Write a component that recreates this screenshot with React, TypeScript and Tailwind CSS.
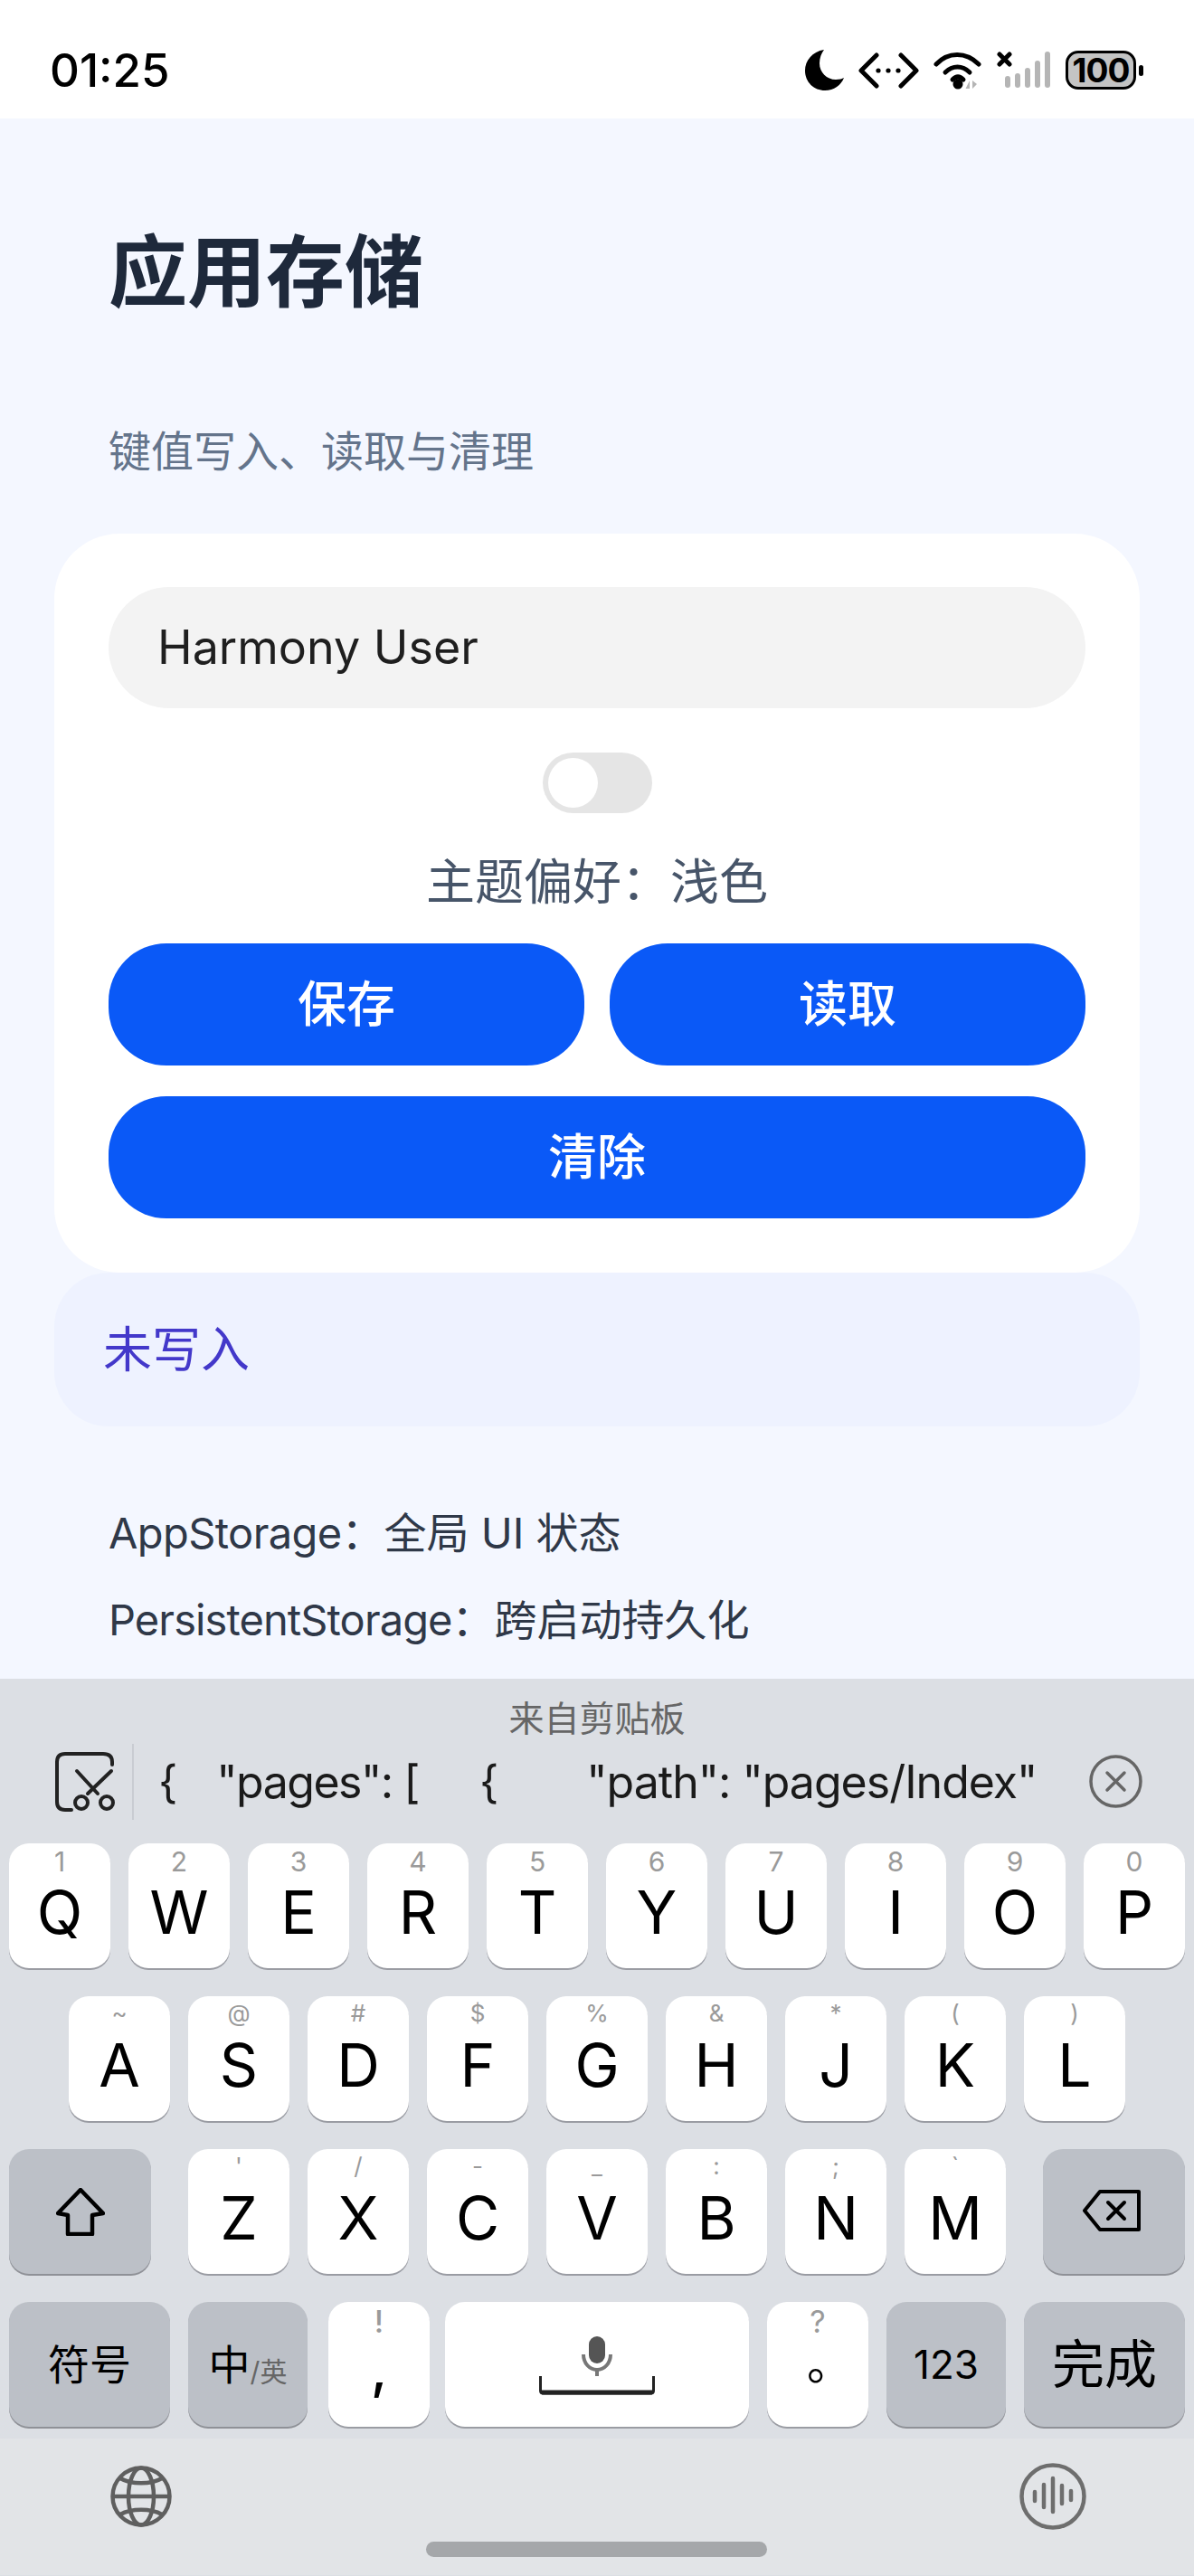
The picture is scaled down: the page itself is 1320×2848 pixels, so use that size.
// Экран "Приложение: хранилище" с открытой системной клавиатурой
import React from 'react';

type Letter = { hint: string; label: string };

const row1: Letter[] = [
  { hint: '1', label: 'Q' }, { hint: '2', label: 'W' }, { hint: '3', label: 'E' }, { hint: '4', label: 'R' }, { hint: '5', label: 'T' },
  { hint: '6', label: 'Y' }, { hint: '7', label: 'U' }, { hint: '8', label: 'I' }, { hint: '9', label: 'O' }, { hint: '0', label: 'P' },
];
const row2: Letter[] = [
  { hint: '~', label: 'A' }, { hint: '@', label: 'S' }, { hint: '#', label: 'D' }, { hint: '$', label: 'F' }, { hint: '%', label: 'G' },
  { hint: '&', label: 'H' }, { hint: '*', label: 'J' }, { hint: '(', label: 'K' }, { hint: ')', label: 'L' },
];
const row3: Letter[] = [
  { hint: "'", label: 'Z' }, { hint: '/', label: 'X' }, { hint: '-', label: 'C' }, { hint: '_', label: 'V' },
  { hint: ':', label: 'B' }, { hint: ';', label: 'N' }, { hint: '`', label: 'M' },
];

// Белая клавиша с буквой и маленькой подсказкой сверху
function LetterKey({ item, hintClass }: { item: Letter; hintClass: string }) {
  return (
    <div className="relative flex h-[138px] w-[112px] items-center justify-center rounded-[22px] bg-white pt-[14px] text-[66px] leading-none text-black shadow-[0_2px_0_#9a9ca3]">
      <span className={hintClass}>{item.hint}</span>
      {item.label}
    </div>
  );
}

// Серая служебная клавиша
function GrayKey({ className, children }: { className: string; children: React.ReactNode }) {
  return (
    <div className={`flex h-[138px] items-center justify-center rounded-[22px] bg-[#bcc0c7] text-black shadow-[0_2px_0_#8f9197] ${className}`}>
      {children}
    </div>
  );
}

function StatusBar() {
  return (
    <div className="flex h-[131px] items-center justify-between bg-white pl-[55px] pr-14 pt-[24px]">
      <span className="text-[51px] font-medium leading-none text-black">01:25</span>
      <div className="flex items-center gap-4">
        <svg width="43" height="45" viewBox="0 0 43 45">
          <path d="M21 0C8 2 0 12 0 23c0 13 10 22 22 22 10 0 18-6 21-14-2 1-5 2-9 2-10 0-18-8-18-18 0-6 2-11 5-15z" fill="#000" />
        </svg>
        <svg width="67" height="40" viewBox="0 0 67 40" fill="none" stroke="#000" strokeWidth="5" strokeLinecap="round" strokeLinejoin="round">
          <path d="M20 3 3 20l17 17M47 3l17 17-17 17" />
          <circle cx="22" cy="20" r="2.6" fill="#000" stroke="none" />
          <circle cx="33" cy="20" r="2.6" fill="#000" stroke="none" />
          <circle cx="44" cy="20" r="2.6" fill="#000" stroke="none" />
        </svg>
        <svg width="54" height="42" viewBox="0 0 54 42" fill="none" stroke="#000" strokeWidth="5" strokeLinecap="round">
          <path d="M3 14C16 0 36 0 50 14" />
          <path d="M13 23c8-8 19-8 27 0" />
          <path d="M21 31c4-4 8-4 12 0" />
          <circle cx="27" cy="36" r="5.5" fill="#000" stroke="none" />
          <path d="M40 41v-9l-4.500 9zM43 32v9l5-5z" fill="#b5b5b5" stroke="none" />
        </svg>
        <svg width="60" height="42" viewBox="0 0 60 42" fill="none">
          <path d="M3 3l11 11M14 3 3 14" stroke="#000" strokeWidth="5" strokeLinecap="round" />
          <g fill="#b5b5b5">
            <rect x="9" y="27" width="6" height="13" rx="3" />
            <rect x="20" y="24" width="6" height="16" rx="3" />
            <rect x="31" y="18" width="6" height="22" rx="3" />
            <rect x="42" y="10" width="6" height="30" rx="3" />
            <rect x="53" y="0" width="6" height="40" rx="3" />
          </g>
        </svg>
        <div className="flex items-center gap-[3px]">
          <div className="flex h-[43px] w-[78px] items-center justify-center rounded-[14px] border-[3px] border-black bg-[#c4c4c4] text-[37px] font-bold leading-none tracking-[-1px] text-black">
            100
          </div>
          <div className="h-[12px] w-[5px] rounded-full bg-black" />
        </div>
      </div>
    </div>
  );
}

function StorageCard() {
  return (
    <div className="mx-[60px] flex flex-col items-center rounded-[72px] bg-white px-[60px] pb-[60px] pt-[59px]">
      <div className="flex h-[134px] w-full items-center rounded-full bg-[#f3f3f3] pl-[54px] text-[52px] text-[#1f1f1f]">Harmony User</div>
      <div className="mt-[49px] flex h-[67px] w-[121px] items-center rounded-full bg-[#e5e5e5] pl-[6px]">
        <div className="h-[55px] w-[55px] rounded-full bg-white" />
      </div>
      <div className="mb-[30px] mt-[39px] text-[54px] leading-[75px] text-[#475569]">主题偏好：浅色</div>
      <div className="flex w-full gap-[28px]">
        <div className="flex h-[135px] flex-1 items-center justify-center rounded-[64px] bg-[#0a59f7] text-[54px] font-medium text-white">保存</div>
        <div className="flex h-[135px] flex-1 items-center justify-center rounded-[64px] bg-[#0a59f7] text-[54px] font-medium text-white">读取</div>
      </div>
      <div className="mt-[34px] flex h-[135px] w-full items-center justify-center rounded-[64px] bg-[#0a59f7] text-[54px] font-medium text-white">清除</div>
    </div>
  );
}

function Keyboard() {
  const hint1 = 'absolute inset-x-0 top-0 text-center text-[30px] leading-[40px] text-[#9a9a9a]';
  const hint2 = 'absolute inset-x-0 top-0 text-center text-[26px] leading-[38px] text-[#9a9a9a]';
  const hint4 = 'absolute inset-x-0 top-0 text-center text-[34px] leading-[44px] text-[#9a9a9a]';

  return (
    <div className="h-[992px] bg-[#dcdfe4]">
      {/* Строка буфера обмена */}
      <div className="h-[182px]">
        <div className="pt-[21px] text-center text-[39px] leading-[46px] text-[#666]">来自剪贴板</div>
        <div className="flex h-[84px] items-center pl-[60px] pt-[9px]">
          <svg width="70" height="70" viewBox="0 0 70 70" fill="none" stroke="#222" strokeWidth="4" strokeLinecap="round">
            <path d="M19 66h-7q-9 0-9-9V13q0-9 9-9h42q10 0 10 9v3" />
            <path d="M25 23l23 25M63 23 37 48" />
            <circle cx="30" cy="58" r="7" />
            <circle cx="58" cy="58" r="7" />
          </svg>
          <div className="ml-[16px] h-[84px] w-[2px] bg-[#c9ccd2]" />
          <div className="ml-[30px] flex w-[1026px] text-[50px] leading-none tracking-[-1px] text-[#1a1a1a]">
            <span className="-ml-[3px]">{'{'}</span>
            <span className="ml-[44px] tracking-[-1.5px]">"pages": [</span>
            <span className="ml-[67px]">{'{'}</span>
            <span className="ml-[98px]">"path": "pages/Index"</span>
          </div>
          <svg width="59" height="59" viewBox="0 0 59 59" fill="none" stroke="#666" strokeWidth="3.500" strokeLinecap="round">
            <circle cx="29.500" cy="29.500" r="27.500" />
            <path d="M20 20l19 19M39 20 20 39" />
          </svg>
        </div>
      </div>

      {/* Ряды клавиш */}
      <div className="flex justify-between px-[10px]">
        {row1.map((item) => <LetterKey key={item.label} item={item} hintClass={hint1} />)}
      </div>
      <div className="mt-[31px] flex gap-[20px] pl-[76px]">
        {row2.map((item) => <LetterKey key={item.label} item={item} hintClass={hint2} />)}
      </div>
      <div className="mt-[31px] flex px-[10px]">
        <GrayKey className="w-[157px]">
          <svg width="54" height="53" viewBox="0 0 54 53" fill="none" stroke="#000" strokeWidth="4.500" strokeLinejoin="round">
            <path d="M27 2 2 28l11 2v21h27V30l12-2z" />
          </svg>
        </GrayKey>
        <div className="ml-[41px] flex gap-[20px]">
          {row3.map((item) => <LetterKey key={item.label} item={item} hintClass={hint2} />)}
        </div>
        <GrayKey className="ml-[41px] w-[157px] pb-[2px] pr-[5px]">
          <svg width="64" height="46" viewBox="0 0 64 46" fill="none" stroke="#000" strokeWidth="4" strokeLinecap="round" strokeLinejoin="round">
            <path d="M2 23 19 2h43v42H19z" />
            <path d="M28 14l18 18M46 14 28 32" />
          </svg>
        </GrayKey>
      </div>
      <div className="mt-[31px] flex px-[10px]">
        <GrayKey className="w-[178px] text-[46px]">符号</GrayKey>
        <GrayKey className="ml-[20px] w-[132px]">
          <div className="flex items-end">
            <span className="text-[46px] leading-[1]">中</span>
            <span className="text-[30px] leading-[1] text-[#666]">/英</span>
          </div>
        </GrayKey>
        <div className="relative ml-[23px] flex h-[138px] w-[112px] items-center justify-center rounded-[22px] bg-white pt-[8px] text-[60px] font-medium leading-none shadow-[0_2px_0_#9a9ca3]">
          <span className={hint4}>!</span>,
        </div>
        <div className="ml-[17px] flex h-[138px] w-[336px] flex-col items-center justify-end rounded-[22px] bg-white pb-[34px] shadow-[0_2px_0_#9a9ca3]">
          <svg width="34" height="44" viewBox="0 0 34 44" fill="none">
            <rect x="8" y="0" width="18" height="30" rx="9" fill="#555" />
            <path d="M2 20c0 10 7 17 15 17s15-7 15-17" stroke="#777" strokeWidth="4" />
            <path d="M17 37v7" stroke="#777" strokeWidth="4" />
          </svg>
          <svg width="128" height="22" viewBox="0 0 128 22" fill="none">
            <path d="M1.500 0v16q0 3 3 3h119q3 0 3-3V0" stroke="#222" strokeWidth="3" />
            <path d="M3 18h122" stroke="#222" strokeWidth="5" />
          </svg>
        </div>
        <div className="relative ml-[20px] flex h-[138px] w-[112px] items-center justify-center rounded-[22px] bg-white pb-[2px] pl-[26px] text-[50px] leading-none shadow-[0_2px_0_#9a9ca3]">
          <span className={hint4}>?</span>。
        </div>
        <GrayKey className="ml-[20px] w-[132px] text-[44px]">123</GrayKey>
        <GrayKey className="ml-[20px] w-[178px] text-[58px]">完成</GrayKey>
      </div>

      {/* Нижняя панель клавиатуры */}
      <div className="relative mt-[13px] h-[151px] bg-[#e2e4e7]">
        <div className="flex items-start justify-between pl-[122px] pr-[119px] pt-[30px]">
          <svg width="68" height="68" viewBox="0 0 68 68" fill="none" stroke="#5f5f5f" strokeWidth="4.500">
            <circle cx="34" cy="34" r="31.500" />
            <ellipse cx="34" cy="34" rx="14" ry="31.500" />
            <path d="M3 34h62M11 14c12 7 34 7 46 0M11 54c12-7 34-7 46 0" />
          </svg>
          <svg className="mt-[-3px]" width="74" height="74" viewBox="0 0 74 74" fill="none" stroke="#6e6e6e" strokeWidth="4.500" strokeLinecap="round">
            <circle cx="37" cy="37" r="34.500" />
            <path d="M17 32v10M27 24v25M37 17v37M47 25v20M57 31v10" />
          </svg>
        </div>
        <div className="absolute bottom-[20px] left-[471px] h-[17px] w-[377px] rounded-full bg-[#a5a7aa]" />
      </div>
    </div>
  );
}

export default function App() {
  return (
    <div className="flex h-[2848px] w-[1320px] flex-col overflow-hidden bg-[#f4f7ff] font-[Inter,'Noto_Sans_CJK_SC',sans-serif]">
      <StatusBar />
      <main className="h-[1725px] overflow-hidden">
        <h1 className="pl-[120px] pt-[118px] text-[87px] font-bold leading-[106px] text-[#1e293b]">应用存储</h1>
        <p className="pl-[120px] pt-[114px] text-[47px] leading-[60px] text-[#64748b]">键值写入、读取与清理</p>
        <div className="mt-[61px]">
          <StorageCard />
        </div>
        <div className="mx-[60px] flex h-[170px] items-center rounded-[60px] bg-[#eef2ff] pl-[54px] text-[54px] text-[#4338ca]">未写入</div>
        <p className="pl-[120px] pt-[88px] text-[47px] leading-[60px] text-[#2f3848]">
          <span className="tracking-[-0.6px]">AppStorage</span>：全局 UI 状态
        </p>
        <p className="pl-[120px] pt-[36px] text-[47px] leading-[60px] text-[#2f3848]">
          <span className="tracking-[-0.9px]">PersistentStorage</span>：跨启动持久化
        </p>
      </main>
      <Keyboard />
    </div>
  );
}
